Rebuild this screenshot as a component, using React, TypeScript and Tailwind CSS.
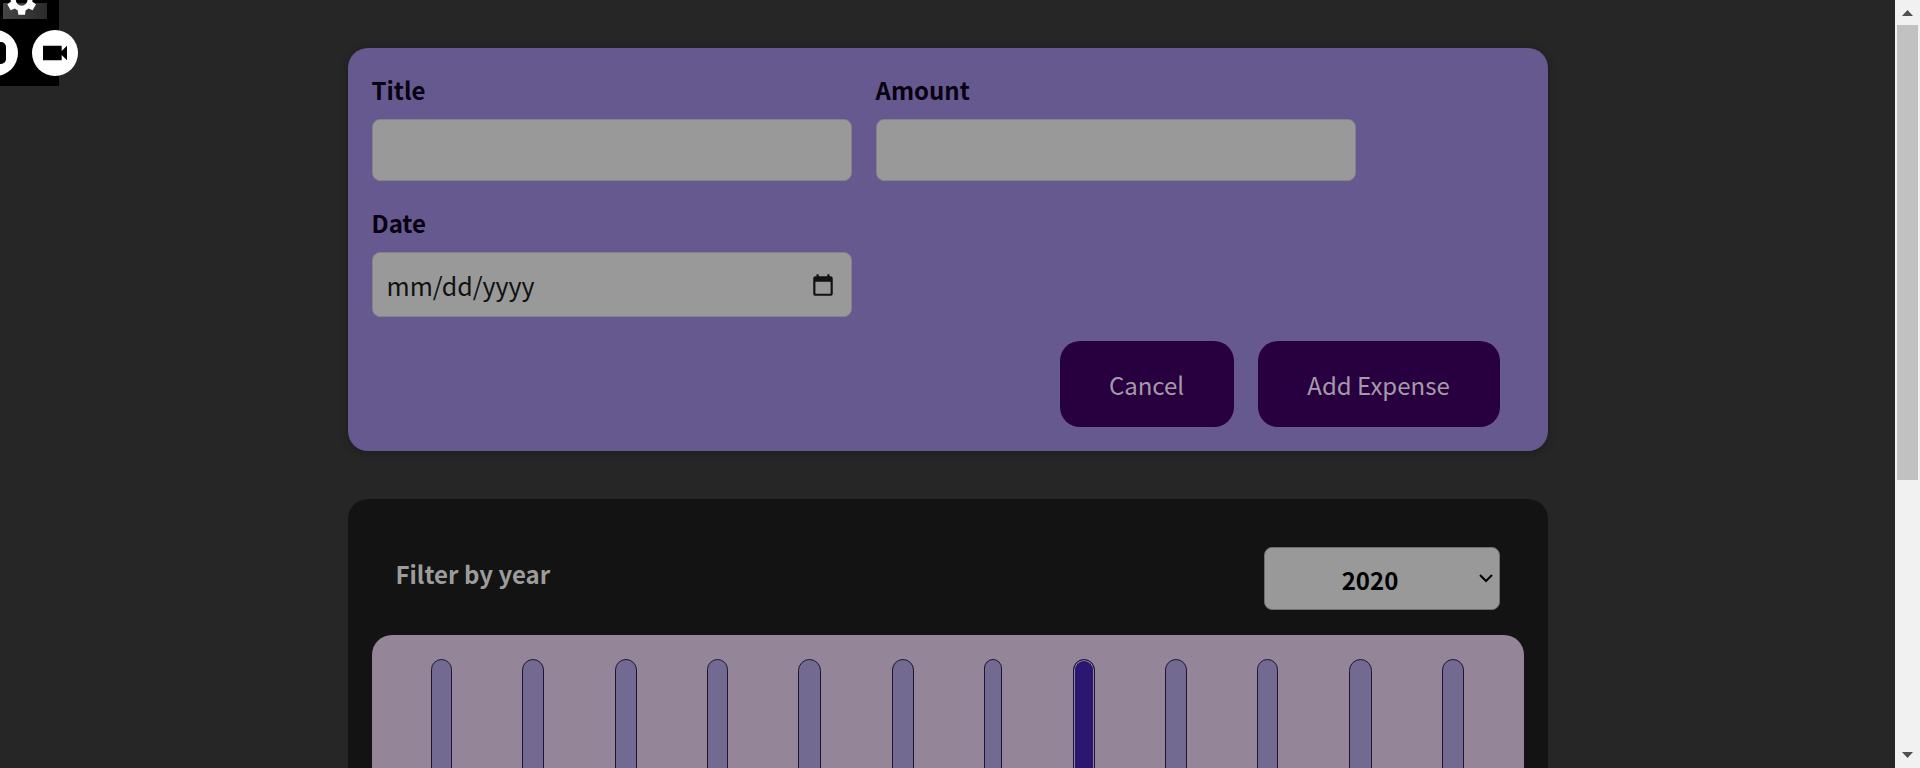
const FONT = "font-['Noto_Sans_CJK_SC','Noto_Sans',sans-serif]";

const BARS = [21, 22, 22, 21, 23, 22, 18, 22, 22, 21, 23, 22];
const ACTIVE_BAR = 7;

function CaptureWidget() {
  return (
    <div className="absolute left-0 top-0 h-[86px] w-[59px] bg-black">
      <div className="absolute left-[3px] top-[3px] h-4 w-11 bg-linear-to-r from-[#444444] to-[#2b2b2b]" />
      <svg
        className="absolute left-0 top-[-20px] h-10 w-10 text-white"
        viewBox="0 0 24 24"
        fill="currentColor"
      >
        <path d="M19.4 13a7.5 7.5 0 0 0 0-2l2.1-1.6-2-3.5-2.5 1a7.6 7.6 0 0 0-1.7-1L15 3.2h-4l-.4 2.7a7.6 7.6 0 0 0-1.7 1l-2.5-1-2 3.5L6.5 11a7.5 7.5 0 0 0 0 2l-2.1 1.6 2 3.5 2.5-1a7.6 7.6 0 0 0 1.7 1l.4 2.7h4l.4-2.7a7.6 7.6 0 0 0 1.7-1l2.5 1 2-3.5zM13 15.5a3.5 3.5 0 1 1 0-7 3.5 3.5 0 0 1 0 7z" />
      </svg>
      <div className="absolute left-[-28px] top-[30px] flex h-[46px] w-[46px] items-center justify-center rounded-full bg-white">
        <div className="h-[22px] w-[22px] rounded-[5px] border-[6px] border-black" />
      </div>
      <div className="absolute left-[32px] top-[30px] flex h-[46px] w-[46px] items-center justify-center rounded-full bg-white">
        <svg className="h-8 w-8" viewBox="0 0 24 24" fill="black">
          <path d="M17 10.5V6.5H3v11h14v-4l4 4v-11z" />
        </svg>
      </div>
    </div>
  );
}

function Field({ label, children }: { label: string; children: React.ReactNode }) {
  return (
    <div className="flex w-[480px] flex-col">
      <label className="mb-3 h-[35px] text-[24px] leading-[35px] font-bold text-[#07000f]">
        {label}
      </label>
      {children}
    </div>
  );
}

function ExpenseForm() {
  return (
    <form className="flex h-[403px] flex-col rounded-[20px] bg-[#665990] p-6 shadow-[0_1px_8px_rgba(0,0,0,0.25)]">
      <div className="flex flex-wrap gap-x-6 gap-y-6">
        <Field label="Title">
          <input className="h-[62px] rounded-lg border border-[#85828c] bg-[#999999]" />
        </Field>
        <Field label="Amount">
          <input className="h-[62px] rounded-lg border border-[#85828c] bg-[#999999]" />
        </Field>
        <div className="w-full">
          <Field label="Date">
            <div className="flex h-[65px] items-center justify-between rounded-lg border border-[#85828c] bg-[#999999] pl-[14px] pr-[15px]">
              <span className="mt-[3px] text-[25px] text-[#111111]">mm/dd/yyyy</span>
              <svg className="h-[26px] w-[26px]" viewBox="0 0 24 24" fill="#111111">
                <path d="M19 4h-1V2h-2v2H8V2H6v2H5a2 2 0 0 0-2 2v14a2 2 0 0 0 2 2h14a2 2 0 0 0 2-2V6a2 2 0 0 0-2-2zm0 16H5V9h14z" />
              </svg>
            </div>
          </Field>
        </div>
      </div>
      <div className="mt-6 mr-6 flex justify-end gap-6">
        <button
          type="button"
          className="h-[86px] w-[174px] rounded-[20px] bg-[#28003f] pt-[2px] text-[24px] text-[#a39ba8]"
        >
          Cancel
        </button>
        <button
          type="button"
          className="h-[86px] w-[242px] rounded-[20px] bg-[#28003f] pt-[2px] text-[24px] text-[#a39ba8]"
        >
          Add Expense
        </button>
      </div>
    </form>
  );
}

function Expenses() {
  return (
    <section className="mt-12 rounded-[20px] bg-[#131313] p-6">
      <div className="mb-[25px] mt-6 flex items-start justify-between px-6">
        <span className="mt-[7px] text-[24px] leading-[40px] font-bold text-[#9c9c9c]">
          Filter by year
        </span>
        <div className="relative flex h-[63px] w-[236px] items-center justify-center rounded-lg border border-[#6f6f6f] bg-[#999999] pr-[23px] pt-[2px] text-[24px] font-bold text-black">
          2020
          <svg className="absolute right-[5px] top-[25px] h-3 w-4" viewBox="0 0 16 12" fill="none" stroke="black" strokeWidth="2">
            <path d="M2 2l6 6 6-6" />
          </svg>
        </div>
      </div>
      <div className="flex h-[300px] justify-around rounded-[20px] bg-[#948598] px-6 pt-6">
        {BARS.map((width, i) => (
          <div
            key={i}
            className={
              i === ACTIVE_BAR
                ? "h-[300px] rounded-full border border-[#1d1633] bg-[#2b1670] shadow-[inset_0_0_0_1px_#8d83a5]"
                : "h-[300px] rounded-full border border-[#1d1633] bg-[#726a91]"
            }
            style={{ width }}
          />
        ))}
      </div>
    </section>
  );
}

function Scrollbar() {
  return (
    <div className="flex h-screen w-[25px] shrink-0 flex-col items-center bg-[#f1f1f1]">
      <svg className="mt-[10px] h-[6px] w-[11px]" viewBox="0 0 11 6" fill="#505050">
        <path d="M5.5 0L11 6H0z" />
      </svg>
      <div className="mt-[9px] h-[455px] w-[21px] bg-[#c1c1c1]" />
      <svg className="mt-auto mb-[10px] h-[6px] w-[11px]" viewBox="0 0 11 6" fill="#505050">
        <path d="M0 0H11L5.5 6z" />
      </svg>
    </div>
  );
}

export default function App() {
  return (
    <div className={`flex h-screen overflow-hidden bg-[#262626] ${FONT}`}>
      <main className="relative h-screen flex-1 overflow-hidden pt-12">
        <CaptureWidget />
        <div className="mx-auto w-[1200px]">
          <ExpenseForm />
          <Expenses />
        </div>
      </main>
      <Scrollbar />
    </div>
  );
}
